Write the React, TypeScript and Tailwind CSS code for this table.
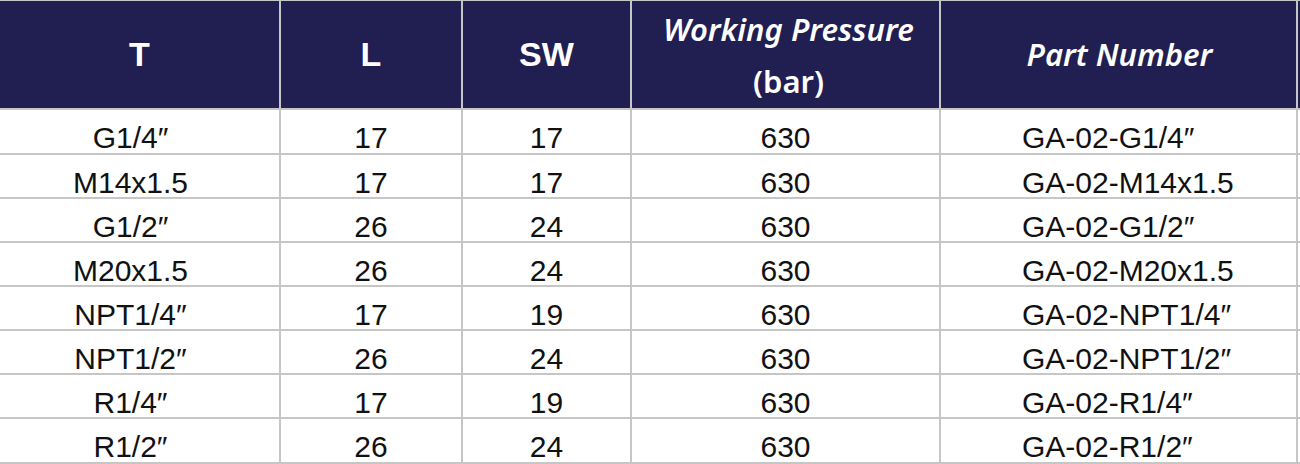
const rows = [
  { t: 'G1/4″', l: '17', sw: '17', p: '630', part: 'GA-02-G1/4″' },
  { t: 'M14x1.5', l: '17', sw: '17', p: '630', part: 'GA-02-M14x1.5' },
  { t: 'G1/2″', l: '26', sw: '24', p: '630', part: 'GA-02-G1/2″' },
  { t: 'M20x1.5', l: '26', sw: '24', p: '630', part: 'GA-02-M20x1.5' },
  { t: 'NPT1/4″', l: '17', sw: '19', p: '630', part: 'GA-02-NPT1/4″' },
  { t: 'NPT1/2″', l: '26', sw: '24', p: '630', part: 'GA-02-NPT1/2″' },
  { t: 'R1/4″', l: '17', sw: '19', p: '630', part: 'GA-02-R1/4″' },
  { t: 'R1/2″', l: '26', sw: '24', p: '630', part: 'GA-02-R1/2″' },
];

const cols = 'grid grid-cols-[281px_182px_169px_309px_357px]';
const arial = { fontFamily: '"Liberation Sans", Arial, sans-serif' };
const noto = { fontFamily: '"Noto Sans", "Open Sans", sans-serif' };

export default function App() {
  return (
    <div className="w-[1300px] h-[464px] bg-white overflow-hidden">
      <div className="w-[1300px] border-t border-[#c6c6c6]">
        <div className={`${cols} h-[109px] bg-[#211e52] text-white border-b-2 border-[#c6c6c6]`}>
          <div className="flex items-center justify-center border-r-2 border-[#c6c6c6] text-[34px] font-bold" style={arial}>T</div>
          <div className="flex items-center justify-center border-r-2 border-[#c6c6c6] text-[34px] font-bold" style={arial}>L</div>
          <div className="flex items-center justify-center border-r-2 border-[#c6c6c6] text-[34px] font-bold" style={arial}>SW</div>
          <div className="flex flex-col items-center justify-center border-r-2 border-[#c6c6c6] text-[31px] font-semibold leading-[52px] pl-[6px]" style={noto}>
            <span className="italic">Working Pressure</span>
            <span>(bar)</span>
          </div>
          <div className="flex items-center justify-center border-r-2 border-[#c6c6c6] text-[31px] font-semibold italic pl-[2px]" style={noto}>Part Number</div>
        </div>
        {rows.map((r, i) => (
          <div
            key={r.part}
            className={`${cols} ${i === 0 || i === 7 ? 'h-[45px]' : 'h-[44px]'} border-b-2 border-[#c6c6c6] text-[30px] leading-[30px] text-[#111]`}
            style={arial}
          >
            <div className="flex justify-center border-r-2 border-[#c6c6c6] pr-[18px] pt-[13px]">{r.t}</div>
            <div className="flex justify-center border-r-2 border-[#c6c6c6] pt-[13px]">{r.l}</div>
            <div className="flex justify-center border-r-2 border-[#c6c6c6] pt-[13px]">{r.sw}</div>
            <div className="flex justify-center border-r-2 border-[#c6c6c6] pt-[13px]">{r.p}</div>
            <div className="flex border-r-2 border-[#c6c6c6] pl-[81px] pt-[13px]">{r.part}</div>
          </div>
        ))}
      </div>
    </div>
  );
}
